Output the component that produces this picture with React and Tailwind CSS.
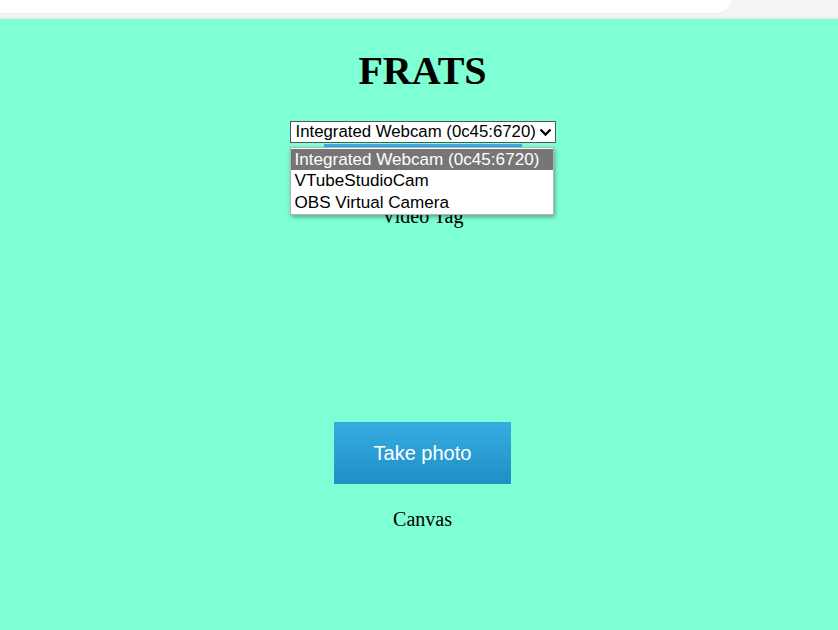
import React from 'react';

const cameras = ['Integrated Webcam (0c45:6720)', 'VTubeStudioCam', 'OBS Virtual Camera'];

const App = () => {
  return (
    <div className="min-h-screen w-full bg-[#7fffd4]">
      {/* browser chrome strip */}
      <div className="h-[19px] bg-[#f4f4f4] border-b-[2px] border-[#ececec]">
        <div className="h-[14px] w-[731px] bg-white rounded-br-[15px] border-b border-[#eeeeee]" />
      </div>

      <div className="flex flex-col items-center pl-[7px]">
        <h1 className="mt-[32px] text-[40px] leading-[40px] font-bold text-black font-['Liberation_Serif',serif]">
          FRATS
        </h1>

        <div className="relative mt-[30px] font-['Liberation_Sans',Arial,sans-serif]">
          <div className="flex items-center w-[266px] h-[22px] border border-[#555] bg-white pl-[5px] pr-[3px] text-[16.8px] leading-[20px] text-black">
            <span className="flex-1 overflow-hidden whitespace-nowrap">{cameras[0]}</span>
            <svg width="13" height="9" viewBox="0 0 13 9" className="shrink-0 ml-[1px]">
              <path d="M1.5 1.5 L6.5 6.5 L11.5 1.5" fill="none" stroke="#000" strokeWidth="2.4" />
            </svg>
          </div>

          <div className="absolute left-0 top-[26px] z-10 w-[264px] bg-white border border-[#b5b5b5] shadow-[1px_2px_4px_rgba(0,0,0,0.35)] py-[1px]">
            {cameras.map((c, i) => (
              <div
                key={c}
                className={
                  i === 0
                    ? 'h-[21.3px] pl-[4px] text-[17.1px] leading-[21px] whitespace-nowrap bg-[#767676] text-white'
                    : 'h-[21.3px] pl-[4px] text-[17.1px] leading-[21px] whitespace-nowrap text-black'
                }
              >
                {c}
              </div>
            ))}
          </div>
        </div>

        <button className="mt-[1px] w-[198px] h-[61px] bg-linear-to-b from-[#36ade2] to-[#1f8fc6] text-white text-[20px] font-['Liberation_Sans',Arial,sans-serif]">
          Start
        </button>
        <p className="text-[20px] leading-[23px] text-black font-['Liberation_Serif',serif]">Video Tag</p>

        <button className="mt-[194px] w-[177px] h-[62px] bg-linear-to-b from-[#36ade2] to-[#1f8fc6] text-white text-[20px] font-['Liberation_Sans',Arial,sans-serif]">
          Take photo
        </button>
        <p className="mt-[24px] text-[20px] leading-[23px] text-black font-['Liberation_Serif',serif]">Canvas</p>
      </div>
    </div>
  );
};

export default App;
